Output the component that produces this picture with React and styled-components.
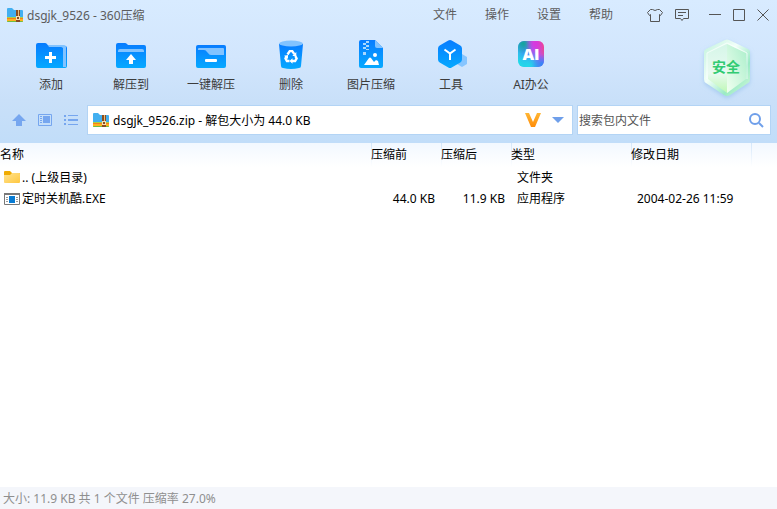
import React, { useState } from 'react';
import styled, { createGlobalStyle } from 'styled-components';

const GlobalStyle = createGlobalStyle`
  * {
    box-sizing: border-box;
  }

  body {
    margin: 0;
    background: #ffffff;
  }

  body, button, input {
    font-family: "Noto Sans", "Noto Sans CJK SC", sans-serif;
    font-size: 12px;
  }
`;

const Window = styled.div`
  display: flex;
  flex-direction: column;
  min-height: 100vh;
  color: #000000;
`;

const Header = styled.header`
  height: 143px;
  background: linear-gradient(#d8ebff, #d2e6fd 40%, #c9e0f9 70%, #c1ddf9);
`;

const TitleBar = styled.div`
  display: flex;
  align-items: center;
  height: 30px;
  padding: 0 8px 0 7px;
  color: #5c5c5c;
`;

const Title = styled.h1`
  flex: 1;
  margin: 0 0 0 4px;
  font-size: 12px;
  font-weight: 400;
`;

const Menu = styled.nav`
  display: flex;
  gap: 28px;
  margin-right: 34px;
  padding-bottom: 3px;
`;

const PlainButton = styled.button`
  display: flex;
  align-items: center;
  justify-content: center;
  padding: 0;
  border: none;
  background: none;
  color: inherit;
  cursor: pointer;
`;

const WindowButtons = styled.div`
  display: flex;
  gap: 12px;
`;

const Divider = styled.div`
  width: 8px;
  margin-left: -12px;
`;

const Toolbar = styled.div`
  display: flex;
  align-items: flex-end;
  height: 75px;
  padding: 0 20px 11px 11px;
`;

const ToolButton = styled(PlainButton)`
  flex-direction: column;
  gap: 4px;
  width: 80px;
  color: #3c3c3c;
  line-height: 18px;
`;

const Badge = styled.div`
  height: 68px;
  margin: 0 0 -9px auto;
`;

const AddressRow = styled.div`
  display: flex;
  align-items: center;
  height: 30px;
  padding: 0 6px 0 12px;
`;

const NavButtons = styled.div`
  display: flex;
  gap: 12px;
  margin-right: 9px;
  color: #76a6ef;
`;

const Field = styled.div`
  display: flex;
  align-items: center;
  height: 30px;
  border: 1px solid #b3d4f5;
  background: #ffffff;
`;

const AddressField = styled(Field)`
  flex: 1;
  margin-right: 4px;
  padding: 0 8px 0 5px;
`;

const SearchField = styled(Field)`
  width: 194px;
  padding: 0 6px 0 1px;
`;

const TextInput = styled.input`
  flex: 1;
  min-width: 0;
  padding: 0;
  border: none;
  outline: none;
  background: none;
  color: #000000;

  &::placeholder {
    color: #555555;
    opacity: 1;
  }
`;

const AddressInput = styled(TextInput)`
  margin-left: 4px;
`;

const AddressActions = styled.div`
  display: flex;
  align-items: center;
  gap: 11px;
`;

const Content = styled.main`
  flex: 1;
`;

const FileTable = styled.table`
  width: 100%;
  border-collapse: collapse;
  table-layout: fixed;
`;

const HeadRow = styled.tr`
  height: 24px;
  background: linear-gradient(#f2f8ff, #ffffff);
`;

const HeadCell = styled.th`
  width: ${(props) => props.$width || 'auto'};
  padding: 0;
  background: ${(props) =>
    props.$first ? 'none' : 'linear-gradient(#d3e6fa, #ffffff) left / 1px 100% no-repeat'};
  font-weight: 400;
  line-height: 18px;
  text-align: left;
  white-space: nowrap;
`;

const Row = styled.tr`
  height: 21px;
`;

const Cell = styled.td`
  padding: 0 6px;
  line-height: 18px;
  text-align: ${(props) => props.$align || 'left'};
  white-space: nowrap;
`;

const NameCell = styled(Cell)`
  padding: 0 0 0 4px;
`;

const FileName = styled.div`
  display: flex;
  align-items: center;
  gap: 2px;
`;

const StatusBar = styled.footer`
  display: flex;
  align-items: center;
  height: 22px;
  padding: 0 3px;
  background: #f4f6fb;
  color: #8f8f8f;
`;

const ArchiveIcon = () => (
  <svg width="16" height="16" viewBox="0 0 16 16" aria-hidden="true">
    <path d="M0 2q0-1 1-1h4l2 2h8q1 0 1 1v8H0z" fill="#42aff0" />
    <path d="M0 10h16v1H0z" fill="#a9d344" />
    <path d="M0 11h16v1H0z" fill="#f47d20" />
    <path d="M0 12h16v2q0 1-1 1H1q-1 0-1-1z" fill="#ffb21c" />
    <path d="M0 14h16q0 1-1 1H1q-1 0-1-1z" fill="#6ebd45" />
    <path d="M9 3h4v12H9z" fill="#8b4d20" />
    <path d="M11 3h1v6h-1z" fill="#e9bd7a" />
    <path d="M9 9h4v4H9z" fill="#f7dfb2" />
    <path d="M10 10h2v2h-2z" fill="#8b4d20" />
  </svg>
);

const BlueGradient = ({ id }) => (
  <linearGradient id={id} x1="0" y1="0" x2="0" y2="1">
    <stop offset="0" stopColor="#087cff" />
    <stop offset="1" stopColor="#06a9ff" />
  </linearGradient>
);

const AddIcon = () => (
  <svg width="32" height="32" viewBox="0 0 32 32" aria-hidden="true">
    <defs><BlueGradient id="add" /></defs>
    <path d="M12 6h18q2 0 2 2v18q0 2-2 2H17z" fill="url(#add)" />
    <path d="M12 5h17q2 0 2 2v20h-3V8H14z" fill="#82c3ff" />
    <path d="M1 5q0-2 2-2h7q1 0 2 1l2 3h12q2 0 2 2v19H3q-2 0-2-2z" fill="url(#add)" />
    <path d="M15.500 12v11M10 17.500h11" stroke="#fff" strokeWidth="3" />
  </svg>
);

const ExtractIcon = () => (
  <svg width="32" height="32" viewBox="0 0 32 32" aria-hidden="true">
    <defs><BlueGradient id="extract" /></defs>
    <path d="M1 5q0-2 2-2h7q1 0 2 1l1 1h16q2 0 2 2v19q0 2-2 2H3q-2 0-2-2z" fill="url(#extract)" />
    <path d="M3 12v-1q0-2 2-2h22q2 0 2 2v1z" fill="#82c3ff" />
    <path d="M16 14l5 6h-3v4h-4v-4h-3z" fill="#fff" />
  </svg>
);

const QuickExtractIcon = () => (
  <svg width="32" height="32" viewBox="0 0 32 32" aria-hidden="true">
    <defs><BlueGradient id="quick" /></defs>
    <rect x="1" y="5" width="30" height="23" rx="2" fill="url(#quick)" />
    <path d="M3 10V9q0-1 1-1h24q1 0 1 1v6H16q-2 0-3-2l-1-1q-1-2-3-2z" fill="#82c3ff" />
    <rect x="10" y="19" width="12" height="3" rx="1" fill="#fff" />
  </svg>
);

const DeleteIcon = () => (
  <svg width="32" height="32" viewBox="0 0 32 32" aria-hidden="true">
    <defs><BlueGradient id="bin" /></defs>
    <path d="M4 4l2 22q0 2 2 2 8 2 16 0 2 0 2-2l2-22z" fill="url(#bin)" />
    <ellipse cx="16" cy="3.500" rx="12" ry="3" fill="#82c3ff" />
    <g fill="none" stroke="#fff" strokeWidth="2.400">
      <path d="M12.500 14.500l2.200-3.400h2.600l2 3" />
      <path d="M20.300 16l1.300 2.500-1.500 2.500h-3.300" />
      <path d="M14.500 21h-2.600l-1.400-2.500 1-2.200" />
    </g>
    <path d="M21.300 12v4h-4zM17.500 18.200v5.500l-3-2.800zM9 15.800l4-.7v4z" fill="#fff" />
  </svg>
);

const ImageIcon = () => (
  <svg width="32" height="32" viewBox="0 0 32 32" aria-hidden="true">
    <defs><BlueGradient id="image" /></defs>
    <path d="M4 2q0-2 2-2h14l8 8v18q0 2-2 2H6q-2 0-2-2z" fill="url(#image)" />
    <path d="M20 0l8 8h-6q-2 0-2-2z" fill="#82c3ff" />
    <path d="M11 1h3v2h-3zM8 3h3v2H8zM11 5h3v2h-3zM8 7h3v2H8zM11 9h3v1h-3zM8 12h3v3H8z" fill="#a9d8ff" />
    <circle cx="20" cy="15" r="2" fill="#fff" />
    <path d="M9 25l5-7q1-1 2 0l3 4 2-2 2 1 1 4z" fill="#fff" />
  </svg>
);

const ToolsIcon = () => (
  <svg width="32" height="32" viewBox="0 0 32 32" aria-hidden="true">
    <defs><BlueGradient id="tools" /></defs>
    <path d="M27 14l5 3v7l-5 3-5-3v-7z" fill="#86c5ff" />
    <path d="M13.300.500q1.700-1 3.400 0l8.600 5q1.700 1 1.700 3v11q0 2-1.700 3l-8.600 5q-1.700 1-3.400 0l-8.600-5Q3 21.500 3 19.500v-11q0-2 1.700-3z" fill="url(#tools)" />
    <path d="M9.500 9.500l5.500 4 5.500-4M15 13.500V20" fill="none" stroke="#fff" strokeWidth="2" />
  </svg>
);

const AiText = styled.text`
  fill: #ffffff;
  font-family: "Open Sans", sans-serif;
  font-size: 16px;
  font-weight: 800;
  text-anchor: middle;
`;

const AiIcon = () => (
  <svg width="32" height="32" viewBox="0 0 32 32" aria-hidden="true">
    <defs>
      <linearGradient id="ai" x1="0" y1="0.8" x2="1" y2="0.2">
        <stop offset="0" stopColor="#20dce7" />
        <stop offset="0.4" stopColor="#4490f5" />
        <stop offset="0.7" stopColor="#bd4fee" />
        <stop offset="1" stopColor="#f34a79" />
      </linearGradient>
      <radialGradient id="aiTeal" cx="0.2" cy="0.1" r="0.4">
        <stop offset="0" stopColor="#10a799" />
        <stop offset="1" stopColor="#10a799" stopOpacity="0" />
      </radialGradient>
      <radialGradient id="aiPink" cx="0.7" cy="0.1" r="0.4">
        <stop offset="0" stopColor="#d836e0" />
        <stop offset="1" stopColor="#d836e0" stopOpacity="0" />
      </radialGradient>
      <radialGradient id="aiCyan" cx="0.4" cy="0.95" r="0.5">
        <stop offset="0" stopColor="#22d9ea" />
        <stop offset="1" stopColor="#22d9ea" stopOpacity="0" />
      </radialGradient>
      <radialGradient id="aiBlue" cx="0.95" cy="0.9" r="0.4">
        <stop offset="0" stopColor="#298af7" />
        <stop offset="1" stopColor="#298af7" stopOpacity="0" />
      </radialGradient>
    </defs>
    <rect x="3" y="1" width="26" height="26" rx="6" fill="url(#ai)" />
    <rect x="3" y="1" width="26" height="26" rx="6" fill="url(#aiTeal)" />
    <rect x="3" y="1" width="26" height="26" rx="6" fill="url(#aiPink)" />
    <rect x="3" y="1" width="26" height="26" rx="6" fill="url(#aiCyan)" />
    <rect x="3" y="1" width="26" height="26" rx="6" fill="url(#aiBlue)" />
    <AiText x="16" y="20">AI</AiText>
  </svg>
);

const ShieldText = styled.text`
  fill: #32cb72;
  font-family: "Noto Sans CJK SC", sans-serif;
  font-size: 14px;
  font-weight: 700;
  text-anchor: middle;
`;

const ShieldBadge = () => (
  <svg width="60" height="68" viewBox="0 0 60 68" role="img" aria-label="安全">
    <defs>
      <linearGradient id="rim" x1="0" y1="0" x2="1" y2="1">
        <stop offset="0" stopColor="#bff2dc" />
        <stop offset="0.4" stopColor="#f2fff9" />
        <stop offset="0.7" stopColor="#9aeac5" />
        <stop offset="1" stopColor="#d9fbdc" />
      </linearGradient>
      <linearGradient id="left" x1="0" y1="0" x2="0" y2="1">
        <stop offset="0" stopColor="#d5f6e8" />
        <stop offset="0.6" stopColor="#e9faf1" />
        <stop offset="1" stopColor="#bdf8b4" />
      </linearGradient>
      <linearGradient id="right" x1="0" y1="1" x2="1" y2="0">
        <stop offset="0" stopColor="#f1fff0" />
        <stop offset="1" stopColor="#abefcb" />
      </linearGradient>
      <filter id="glow" x="-20%" y="-20%" width="140%" height="140%">
        <feDropShadow dx="0" dy="2" stdDeviation="2" floodColor="#8fbde9" floodOpacity="0.6" />
      </filter>
    </defs>
    <path d="M28 5q2-1 4 0l19 9q2 1 2 3v27q0 3-2 4L33 60q-3 2-6 0L9 48q-2-1-2-4V17q0-2 2-3z" fill="url(#rim)" filter="url(#glow)" />
    <path d="M30 9L11 18v26l19 14z" fill="url(#left)" />
    <path d="M30 9l19 9v26L30 58z" fill="url(#right)" />
    <path d="M10 44V18l20-10 20 10v26" fill="none" stroke="#fff" opacity="0.7" />
    <ShieldText x="29" y="37">安全</ShieldText>
  </svg>
);

const ShirtIcon = () => (
  <svg width="16" height="14" viewBox="0 0 16 14" fill="none" stroke="#555" aria-hidden="true">
    <path d="M5.500 1.500h-2L.5 4.500l2 3 1-1v7h9v-7l1 1 2-3-3-3h-2q-2.500 2-5 0z" />
  </svg>
);

const MessageIcon = () => (
  <svg width="14" height="14" viewBox="0 0 14 14" fill="none" stroke="#555" aria-hidden="true">
    <path d="M.5 1.500h13v9h-5l-1.500 2-1.500-2h-5zM3 4.500h8M3 7.500h5" />
  </svg>
);

const MinimizeIcon = () => (
  <svg width="12" height="12" viewBox="0 0 12 12" stroke="#555" aria-hidden="true">
    <path d="M0 5.500h12" />
  </svg>
);

const MaximizeIcon = () => (
  <svg width="12" height="12" viewBox="0 0 12 12" fill="none" stroke="#555" aria-hidden="true">
    <path d="M.5.500h11v11H.5z" />
  </svg>
);

const CloseIcon = () => (
  <svg width="12" height="12" viewBox="0 0 12 12" stroke="#555" aria-hidden="true">
    <path d="M.5.500l11 11M11.500.500l-11 11" />
  </svg>
);

const UpIcon = () => (
  <svg width="14" height="14" viewBox="0 0 14 14" fill="currentColor" aria-hidden="true">
    <path d="M7 1l7 7h-4v5H4V8H0z" />
  </svg>
);

const PreviewIcon = () => (
  <svg width="14" height="14" viewBox="0 0 14 14" aria-hidden="true">
    <path d="M.5 1.500h13v11H.5z" fill="none" stroke="currentColor" />
    <path d="M2 3h2v1H2zM2 5h2v1H2zM2 7h2v1H2zM2 9h2v1H2zM5 3h7v7H5z" fill="currentColor" />
  </svg>
);

const ListIcon = () => (
  <svg width="14" height="14" viewBox="0 0 14 14" fill="currentColor" aria-hidden="true">
    <path d="M0 2h2v2H0zM4 2h10v1H4zM0 6h2v2H0zM4 6h10v2H4zM0 10h2v2H0zM4 11h10v1H4z" />
  </svg>
);

const VipIcon = () => (
  <svg width="16" height="16" viewBox="0 0 16 16" aria-hidden="true">
    <defs>
      <linearGradient id="vip" x1="0" y1="0" x2="0" y2="1">
        <stop offset="0" stopColor="#ffb735" />
        <stop offset="1" stopColor="#ff8c08" />
      </linearGradient>
    </defs>
    <path d="M0 1h4l4 9 4-9h4l-6 14H6z" fill="url(#vip)" />
  </svg>
);

const DropdownIcon = () => (
  <svg width="12" height="6" viewBox="0 0 12 6" fill="#6f9fea" aria-hidden="true">
    <path d="M0 0h12L6 6z" />
  </svg>
);

const SearchIcon = () => (
  <svg width="16" height="16" viewBox="0 0 16 16" fill="none" stroke="#6f9fea" strokeWidth="2" aria-hidden="true">
    <circle cx="7" cy="7" r="5" />
    <path d="M11 11l4 4" />
  </svg>
);

const FolderIcon = () => (
  <svg width="16" height="16" viewBox="0 0 16 16" aria-hidden="true">
    <defs>
      <linearGradient id="folder" x1="0" y1="0" x2="1" y2="1">
        <stop offset="0" stopColor="#ffe391" />
        <stop offset="1" stopColor="#ffc73f" />
      </linearGradient>
    </defs>
    <path d="M0 2q0-1 1-1h5l2 2h7q1 0 1 1v3H0z" fill="#f0ab00" />
    <path d="M0 5h6l2-2h7q1 0 1 1v8q0 1-1 1H1q-1 0-1-1z" fill="url(#folder)" />
  </svg>
);

const ProgramIcon = () => (
  <svg width="16" height="14" viewBox="0 0 16 14" aria-hidden="true">
    <path d="M.5 1.500h15v11H.5z" fill="#fff" stroke="#787878" />
    <path d="M0 1h16v2H0z" fill="#787878" />
    <path d="M2 5h2v1H2zM2 7h2v1H2zM2 9h2v1H2zM12 5h2v1h-2zM12 7h2v1h-2zM12 9h2v1h-2z" fill="#9a9a9a" />
    <path d="M5 4h6v7H5z" fill="#087bd3" />
  </svg>
);

const menus = ['文件', '操作', '设置', '帮助'];

const tools = [
  { label: '添加', icon: <AddIcon /> },
  { label: '解压到', icon: <ExtractIcon /> },
  { label: '一键解压', icon: <QuickExtractIcon /> },
  { label: '删除', icon: <DeleteIcon /> },
  { label: '图片压缩', icon: <ImageIcon /> },
  { label: '工具', icon: <ToolsIcon /> },
  { label: 'AI办公', icon: <AiIcon /> },
];

const files = [
  { name: '.. (上级目录)', icon: <FolderIcon />, type: '文件夹' },
  {
    name: '定时关机酷.EXE',
    icon: <ProgramIcon />,
    size: '44.0 KB',
    packed: '11.9 KB',
    type: '应用程序',
    date: '2004-02-26 11:59',
  },
];

function App() {
  const [address, setAddress] = useState('dsgjk_9526.zip - 解包大小为 44.0 KB');
  const [search, setSearch] = useState('');

  return (
    <Window>
      <GlobalStyle />
      <Header>
        <TitleBar>
          <ArchiveIcon />
          <Title>dsgjk_9526 - 360压缩</Title>
          <Menu>
            {menus.map((menu) => (
              <PlainButton key={menu}>{menu}</PlainButton>
            ))}
          </Menu>
          <WindowButtons>
            <PlainButton aria-label="皮肤"><ShirtIcon /></PlainButton>
            <PlainButton aria-label="反馈"><MessageIcon /></PlainButton>
            <Divider />
            <PlainButton aria-label="最小化"><MinimizeIcon /></PlainButton>
            <PlainButton aria-label="最大化"><MaximizeIcon /></PlainButton>
            <PlainButton aria-label="关闭"><CloseIcon /></PlainButton>
          </WindowButtons>
        </TitleBar>
        <Toolbar>
          {tools.map((tool) => (
            <ToolButton key={tool.label}>
              {tool.icon}
              {tool.label}
            </ToolButton>
          ))}
          <Badge><ShieldBadge /></Badge>
        </Toolbar>
        <AddressRow>
          <NavButtons>
            <PlainButton aria-label="上级目录"><UpIcon /></PlainButton>
            <PlainButton aria-label="预览"><PreviewIcon /></PlainButton>
            <PlainButton aria-label="列表"><ListIcon /></PlainButton>
          </NavButtons>
          <AddressField>
            <ArchiveIcon />
            <AddressInput
              aria-label="地址"
              value={address}
              onChange={(e) => setAddress(e.target.value)}
            />
            <AddressActions>
              <PlainButton aria-label="会员"><VipIcon /></PlainButton>
              <PlainButton aria-label="展开"><DropdownIcon /></PlainButton>
            </AddressActions>
          </AddressField>
          <SearchField>
            <TextInput
              aria-label="搜索包内文件"
              placeholder="搜索包内文件"
              value={search}
              onChange={(e) => setSearch(e.target.value)}
            />
            <PlainButton aria-label="搜索"><SearchIcon /></PlainButton>
          </SearchField>
        </AddressRow>
      </Header>
      <Content>
        <FileTable>
          <thead>
            <HeadRow>
              <HeadCell $first>名称</HeadCell>
              <HeadCell $width="70px">压缩前</HeadCell>
              <HeadCell $width="70px">压缩后</HeadCell>
              <HeadCell $width="120px">类型</HeadCell>
              <HeadCell $width="120px">修改日期</HeadCell>
              <HeadCell $width="26px" />
            </HeadRow>
          </thead>
          <tbody>
            {files.map((file) => (
              <Row key={file.name}>
                <NameCell>
                  <FileName>
                    {file.icon}
                    {file.name}
                  </FileName>
                </NameCell>
                <Cell $align="right">{file.size}</Cell>
                <Cell $align="right">{file.packed}</Cell>
                <Cell>{file.type}</Cell>
                <Cell>{file.date}</Cell>
                <Cell />
              </Row>
            ))}
          </tbody>
        </FileTable>
      </Content>
      <StatusBar>大小: 11.9 KB 共 1 个文件 压缩率 27.0%</StatusBar>
    </Window>
  );
}

export default App;
